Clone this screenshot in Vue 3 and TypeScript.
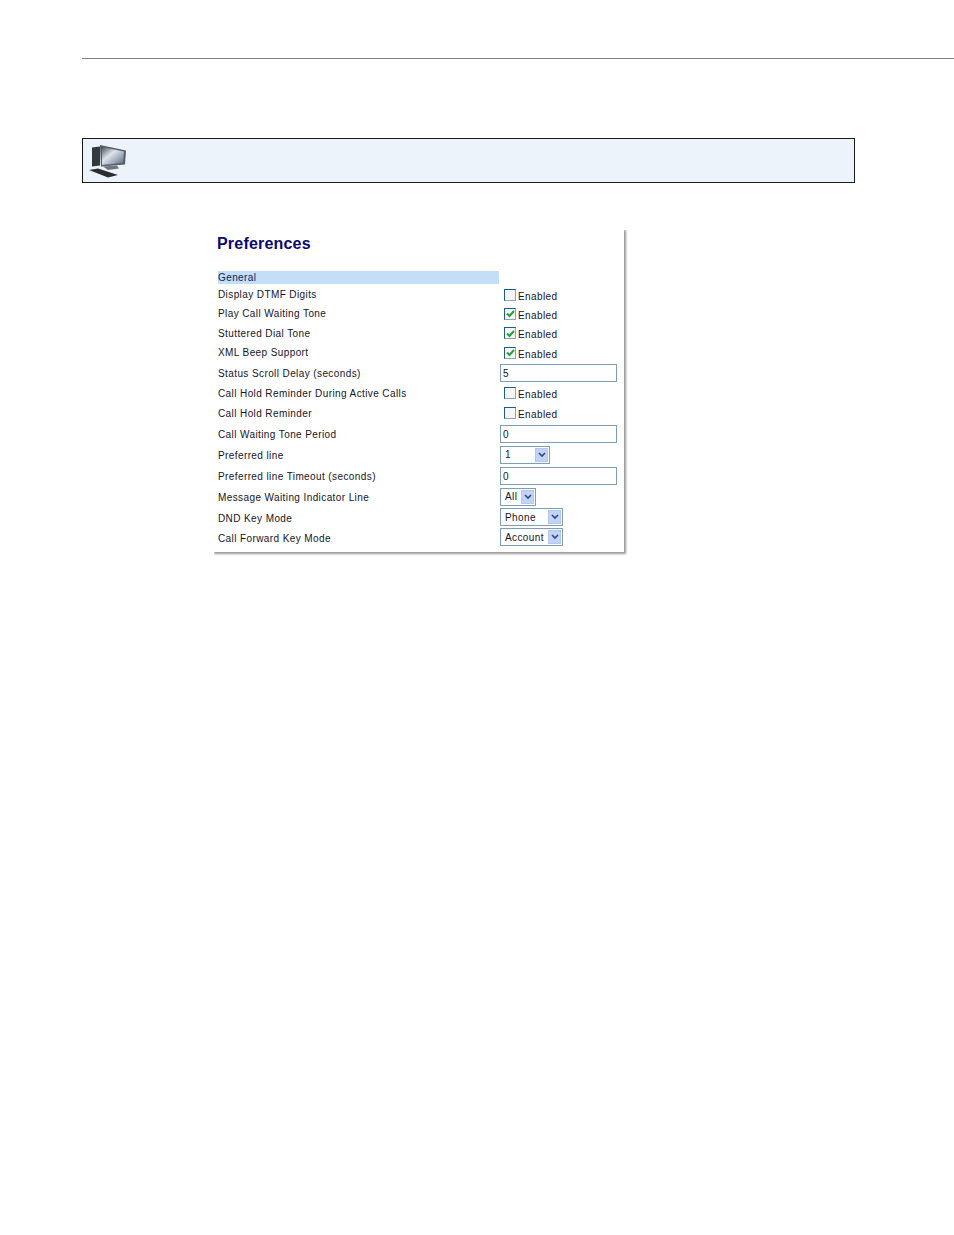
<script setup lang="ts">
interface Row {
  label: string
  kind: 'check' | 'input' | 'select'
  h: number
  checked?: boolean
  value?: string
  width?: number
}
const rows: Row[] = [
  { label: 'Display DTMF Digits', kind: 'check', h: 19, checked: false },
  { label: 'Play Call Waiting Tone', kind: 'check', h: 19, checked: true },
  { label: 'Stuttered Dial Tone', kind: 'check', h: 20, checked: true },
  { label: 'XML Beep Support', kind: 'check', h: 19, checked: true },
  { label: 'Status Scroll Delay (seconds)', kind: 'input', h: 21, value: '5' },
  { label: 'Call Hold Reminder During Active Calls', kind: 'check', h: 20, checked: false },
  { label: 'Call Hold Reminder', kind: 'check', h: 20, checked: false },
  { label: 'Call Waiting Tone Period', kind: 'input', h: 21, value: '0' },
  { label: 'Preferred line', kind: 'select', h: 21, value: '1', width: 50 },
  { label: 'Preferred line Timeout (seconds)', kind: 'input', h: 21, value: '0' },
  { label: 'Message Waiting Indicator Line', kind: 'select', h: 21, value: 'All', width: 36 },
  { label: 'DND Key Mode', kind: 'select', h: 20, value: 'Phone', width: 63 },
  { label: 'Call Forward Key Mode', kind: 'select', h: 20, value: 'Account', width: 63 }
]
</script>

<template>
  <div class="page">
    <div class="rule"></div>
    <div class="banner">
      <svg class="pc" width="38" height="36" viewBox="0 0 38 36">
        <defs>
          <linearGradient id="scr" x1="0" y1="0" x2="1" y2="1">
            <stop offset="0" stop-color="#4a525c" />
            <stop offset="0.4" stop-color="#dfe4ea" />
            <stop offset="0.7" stop-color="#9aa8ba" />
            <stop offset="1" stop-color="#59636e" />
          </linearGradient>
          <filter id="soft" x="-5%" y="-5%" width="110%" height="110%">
            <feGaussianBlur stdDeviation="0.45" />
          </filter>
        </defs>
        <g filter="url(#soft)">
          <path d="M4 4.500l8-1v19l-8 1z" fill="#33373b" />
          <path d="M12 2l26 5.500-1 14-24 2z" fill="#565c62" />
          <path d="M14 4l22 4.500-1 11.500-21 2z" fill="url(#scr)" />
          <path d="M15 23.500l14-1 2 3-11 1.500z" fill="#6f767d" />
          <path d="M1 27l9-1.500 20 6.500-10 2.500z" fill="#2a2e32" />
        </g>
      </svg>
    </div>
    <section class="card">
      <h1 class="title">Preferences</h1>
      <div class="general">General</div>
      <div v-for="row in rows" :key="row.label" class="row" :style="{ height: row.h + 'px' }">
        <span class="label" :class="{ low: row.kind !== 'check' }">{{ row.label }}</span>
        <div class="control">
          <template v-if="row.kind === 'check'">
            <span class="box">
              <svg v-if="row.checked" width="9" height="9" viewBox="0 0 9 9">
                <path d="M1 4.500l2.500 2.500 4.500-5" fill="none" stroke="#23a03c" stroke-width="2" />
              </svg>
            </span>
            <span class="enabled">Enabled</span>
          </template>
          <div v-else-if="row.kind === 'input'" class="input">{{ row.value }}</div>
          <div v-else class="select" :style="{ width: row.width + 'px' }">
            <span class="sel-val">{{ row.value }}</span>
            <span class="arrow">
              <svg width="8" height="6" viewBox="0 0 8 6">
                <path d="M1 1l3 3 3-3" fill="none" stroke="#2a4a80" stroke-width="1.600" />
              </svg>
            </span>
          </div>
        </div>
      </div>
    </section>
  </div>
</template>

<style>
html, body { background: #fff; }
</style>

<style scoped>
.page {
  width: 954px;
  height: 1235px;
  padding-top: 58px;
  box-sizing: border-box;
  font-family: "Liberation Sans", Arial, sans-serif;
  overflow: hidden;
}
.rule {
  height: 1px;
  margin-left: 82px;
  background: #7f7f7f;
}
.banner {
  margin: 79px 0 0 82px;
  width: 773px;
  height: 45px;
  box-sizing: border-box;
  border: 1px solid #1a1a1a;
  background: #edf3fb;
  display: flex;
  align-items: center;
  padding-left: 5px;
}
.card {
  margin: 47px 0 0 214px;
  width: 410px;
  height: 322px;
  box-sizing: border-box;
  padding: 5px 0 0 4px;
  background: #fff;
  box-shadow: 1px 1px 2px 1px #9a9a9a;
  clip-path: inset(0 -6px -6px 0);
}
.title {
  margin: 0 0 0 -1px;
  height: 36px;
  font-size: 16px;
  line-height: 17px;
  letter-spacing: 0.2px;
  font-weight: 700;
  color: #0a0a6e;
}
.general {
  width: 281px;
  height: 13px;
  margin-bottom: 1px;
  background: #c3def7;
  font-size: 10px;
  line-height: 13px;
  letter-spacing: 0.4px;
  color: #0a1a5a;
}
.row {
  display: flex;
  align-items: center;
  font-size: 10px;
  color: #141428;
  letter-spacing: 0.4px;
}
.label {
  width: 282px;
  white-space: nowrap;
}
.label.low {
  padding-top: 2px;
}
.control {
  display: flex;
  align-items: center;
}
.box {
  width: 12px;
  height: 12px;
  box-sizing: border-box;
  margin-left: 4px;
  margin-right: 2px;
  border: 1px solid #1f5a8c;
  border-bottom-color: #8aa4bc;
  border-right-color: #8aa4bc;
  background: #f6f6f6;
  display: flex;
  align-items: center;
  justify-content: center;
}
.enabled {
  position: relative;
  top: 1.500px;
}
.input {
  width: 117px;
  height: 18px;
  box-sizing: border-box;
  border: 1px solid #7f9db9;
  padding-left: 2px;
  line-height: 18px;
}
.select {
  height: 18px;
  box-sizing: border-box;
  border: 1px solid #7f9db9;
  display: flex;
  align-items: center;
  justify-content: space-between;
  padding: 0 1px 0 4px;
}
.arrow {
  width: 13px;
  height: 14px;
  background: #c3d3f5;
  border: 1px solid #b4c7ee;
  box-sizing: border-box;
  display: flex;
  align-items: center;
  justify-content: center;
}
</style>
